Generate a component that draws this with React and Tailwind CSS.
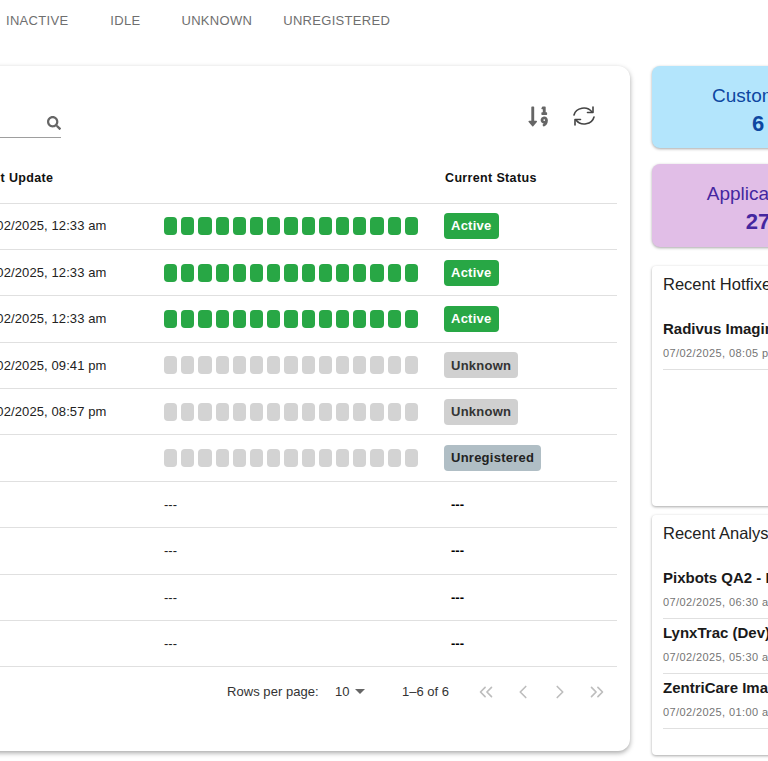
import { ChevronsLeft, ChevronLeft, ChevronRight, ChevronsRight } from 'lucide-react'
import { FaSearch, FaSortNumericDown } from 'react-icons/fa'

const ROWS = [
  { date: '07/02/2025, 12:33 am', bar: 'active', status: 'Active' },
  { date: '07/02/2025, 12:33 am', bar: 'active', status: 'Active' },
  { date: '07/02/2025, 12:33 am', bar: 'active', status: 'Active' },
  { date: '07/02/2025, 09:41 pm', bar: 'none', status: 'Unknown' },
  { date: '07/02/2025, 08:57 pm', bar: 'none', status: 'Unknown' },
  { date: '', bar: 'none', status: 'Unregistered' },
  { date: '' },
  { date: '' },
  { date: '' },
  { date: '' },
]

const CHIP = {
  Active: 'bg-[#28a745] text-white',
  Unknown: 'bg-[#d0d0d0] text-[#333]',
  Unregistered: 'bg-[#b0bec5] text-[#222]',
}

const HOTFIXES = [{ name: 'Radivus Imaging', date: '07/02/2025, 08:05 pm' }]
const ANALYSES = [
  { name: 'Pixbots QA2 - Production', date: '07/02/2025, 06:30 am' },
  { name: 'LynxTrac (Dev)', date: '07/02/2025, 05:30 am' },
  { name: 'ZentriCare Imaging', date: '07/02/2025, 01:00 am' },
]

function Bar({ kind }) {
  return (
    <div className="flex w-[254px] gap-[4px]">
      {Array.from({ length: 15 }).map((_, i) => (
        <div key={i} className={`h-[18px] flex-1 rounded-[4px] ${kind === 'active' ? 'bg-[#28a745]' : 'bg-[#d3d3d3]'}`} />
      ))}
    </div>
  )
}

function Row({ row }) {
  return (
    <div className="flex h-[46.4px] items-center border-b border-[#e0e0e0] text-[13px] text-[#222]">
      <div className="w-[191px] shrink-0 pl-[5px] tracking-[0.1px]">{row.date}</div>
      <div className="w-[254px] shrink-0">{row.bar ? <Bar kind={row.bar} /> : '---'}</div>
      <div className="ml-[26px]">
        {row.status
          ? <span className={`inline-flex h-[26px] items-center rounded-[4px] px-[7px] text-[13px] font-bold tracking-[0.25px] ${CHIP[row.status]}`}>{row.status}</span>
          : <span className="ml-[7px] font-bold text-black">---</span>}
      </div>
    </div>
  )
}

function RecentCard({ title, items, className }) {
  return (
    <div className={`h-[240px] w-[212px] rounded-[4px] bg-white px-[11px] pt-[8px] shadow-[0_1px_3px_rgba(0,0,0,0.35)] ${className}`}>
      <div className="mb-[21px] whitespace-nowrap text-[16.5px] leading-[20px] text-[#222]">{title}</div>
      {items.map(item => (
        <div key={item.name} className="h-[55px] border-b border-[#e0e0e0] pt-[5px]">
          <div className="whitespace-nowrap text-[15px] font-bold leading-[18px] text-[#1a1a1a]">{item.name}</div>
          <div className="mt-[9px] whitespace-nowrap text-[11px] leading-[13px] tracking-[0.4px] text-[#757575]">{item.date}</div>
        </div>
      ))}
    </div>
  )
}

export default function App() {
  return (
    <div className="h-[761px] w-[768px] overflow-hidden bg-white font-['Liberation_Sans',Arial,sans-serif]">
      <div className="flex h-[66px] pt-[13px] text-[13px] leading-[15px] tracking-[0.3px] text-[#6f6f6f]">
        <span className="ml-[6px]">INACTIVE</span>
        <span className="ml-[42px]">IDLE</span>
        <span className="ml-[41px]">UNKNOWN</span>
        <span className="ml-[31px]">UNREGISTERED</span>
      </div>
      <div className="flex items-start">
        <div className="ml-[-40px] h-[685px] w-[670px] shrink-0 rounded-[12px] bg-white px-[13px] shadow-[0_2px_5px_rgba(0,0,0,0.35)]">
          <div className="flex h-[89px] items-start justify-between">
            <div className="mt-[42px] flex h-[30px] w-[88px] items-center justify-end border-b border-[#9e9e9e]">
              <FaSearch size={14} className="text-[#666]" />
            </div>
            <div className="mt-[38px] flex items-center gap-[22px] pr-[21px]">
              <FaSortNumericDown size={23} className="text-[#666]" />
              <svg width="24" height="24" viewBox="0 0 24 24" fill="none" stroke="#444" strokeWidth="1.6" strokeLinecap="round" strokeLinejoin="round">
                <path d="M2 11 A10 9 0 0 1 20 8" />
                <path d="M21 3 V8.5 H15.5" />
                <path d="M22 13 A10 9 0 0 1 4 16" />
                <path d="M3 21 V15.5 H8.5" />
              </svg>
            </div>
          </div>
          <div className="flex h-[48.5px] items-center border-b border-[#e0e0e0] text-[12.5px] font-bold tracking-[0.35px] text-[#111]">
            <div className="w-[191px] shrink-0 pl-[5px]">Last Update</div>
            <div className="w-[254px] shrink-0" />
            <div className="ml-[27px]">Current Status</div>
          </div>
          {ROWS.map((row, i) => <Row key={i} row={row} />)}
          <div className="flex h-[49px] items-center text-[13px] text-[#333]">
            <div className="ml-[254px] w-[92px] shrink-0 whitespace-nowrap tracking-[0.05px]">Rows per page:</div>
            <div className="ml-[16px] flex w-[30px] shrink-0 items-center justify-between">
              <span>10</span>
              <span className="h-0 w-0 border-x-[5px] border-t-[5px] border-x-transparent border-t-[#666]" />
            </div>
            <div className="ml-[37px] w-[47px] shrink-0 whitespace-nowrap">1–6 of 6</div>
            <div className="ml-[26px] flex gap-[15px] text-[#bdbdbd]">
              <ChevronsLeft size={22} strokeWidth={1.8} />
              <ChevronLeft size={22} strokeWidth={1.8} />
              <ChevronRight size={22} strokeWidth={1.8} />
              <ChevronsRight size={22} strokeWidth={1.8} />
            </div>
          </div>
        </div>
        <div className="ml-[22px] flex shrink-0 flex-col">
          <div className="flex h-[82px] w-[212px] flex-col items-center justify-center rounded-[8px] bg-[#b3e5fc] pt-[9px] text-[#0d47a1] shadow-[0_1px_3px_rgba(0,0,0,0.35)]">
            <div className="text-[19px] leading-[24px]">Customers</div>
            <div className="text-[22px] font-bold leading-[32px]">6</div>
          </div>
          <div className="mt-[16px] flex h-[83px] w-[212px] flex-col items-center justify-center rounded-[8px] bg-[#e1bee7] pt-[9px] text-[#4527a0] shadow-[0_1px_3px_rgba(0,0,0,0.35)]">
            <div className="text-[19px] leading-[24px]">Applications</div>
            <div className="text-[22px] font-bold leading-[32px]">27</div>
          </div>
          <RecentCard title="Recent Hotfixes" items={HOTFIXES} className="mt-[19px]" />
          <RecentCard title="Recent Analysis" items={ANALYSES} className="mt-[9px]" />
        </div>
      </div>
    </div>
  )
}
